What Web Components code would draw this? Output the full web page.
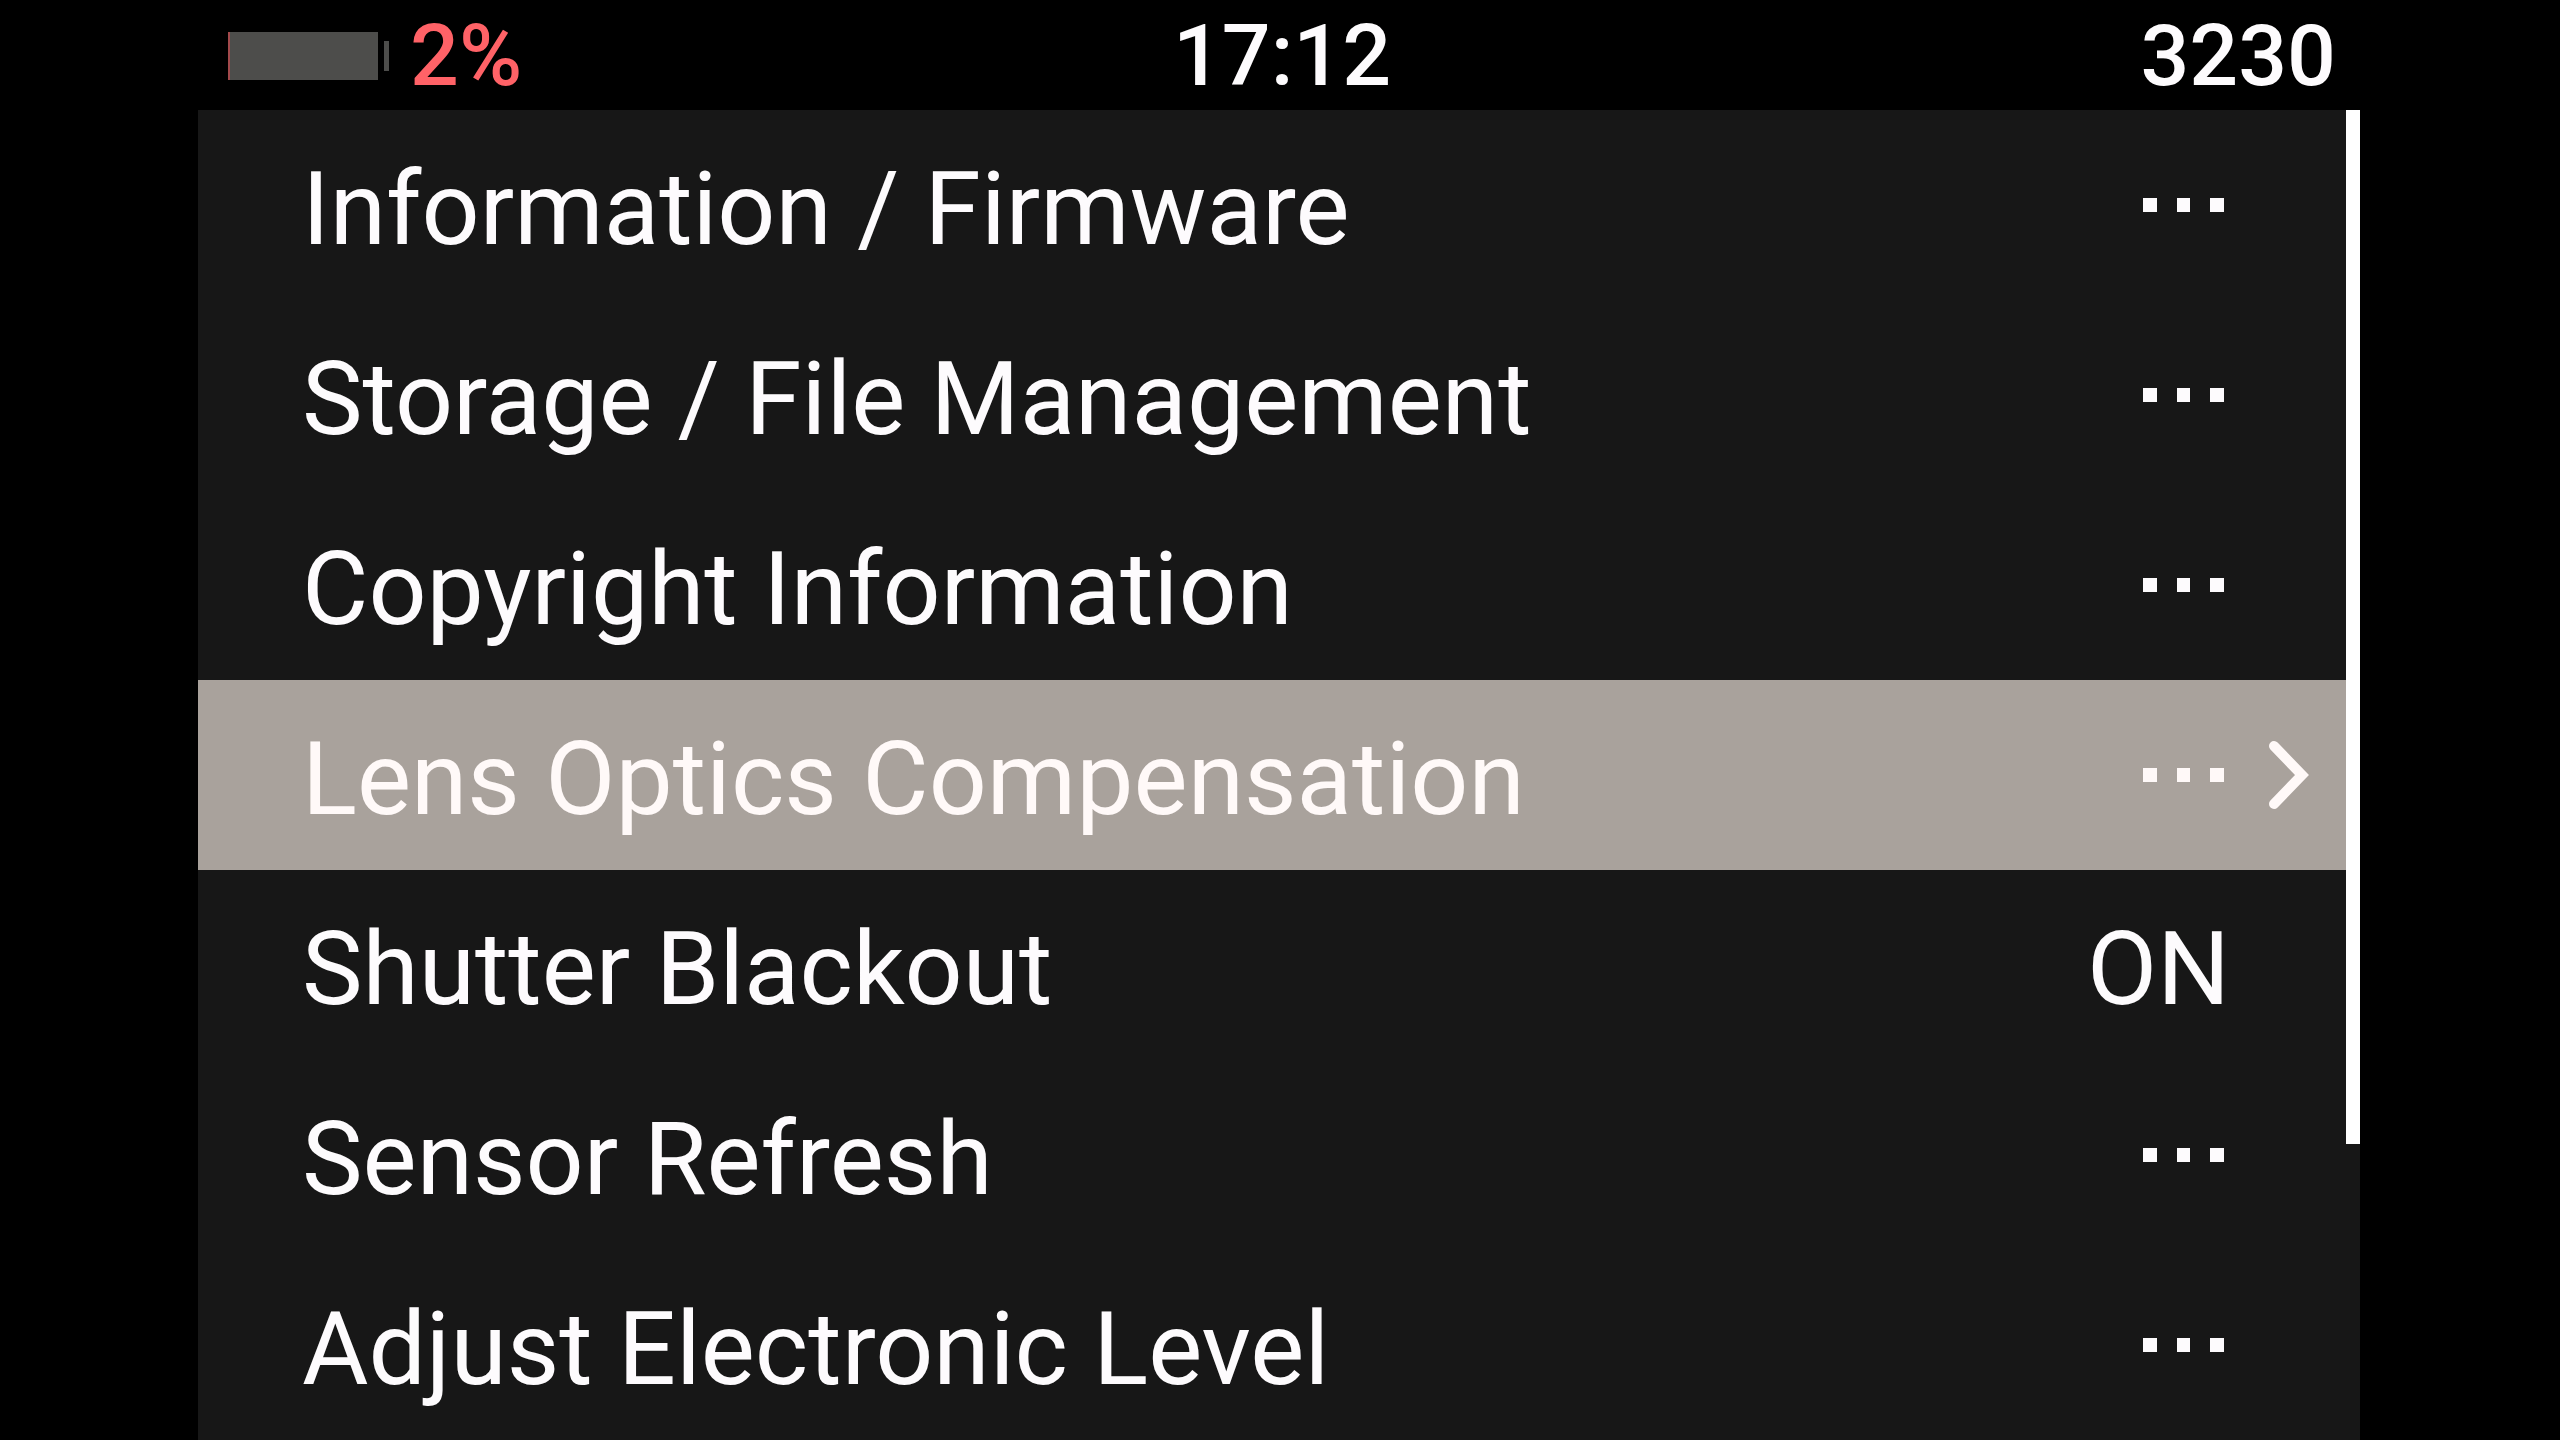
<!DOCTYPE html>
<html lang="en">
<head>
<meta charset="UTF-8">
<meta name="viewport" content="width=device-width, initial-scale=1.0">
<title>Camera Menu</title>
<style>
    body {
        margin: 0;
        background: #000;
        color: #fdfbfd;
        font-family: Roboto, "Liberation Sans", sans-serif;
    }
</style>
</head>
<body>
<camera-menu></camera-menu>
<script>
// Battery icon with its charge level
class BatteryLevel extends HTMLElement {
    constructor() {
        super();
        this.attachShadow({ mode: 'open' });
    }
    connectedCallback() {
        const level = Number(this.getAttribute('level'));
        this.shadowRoot.innerHTML = `
            <style>
                :host {
                    display: flex;
                    align-items: center;
                    gap: 20px;
                    color: #ff6267;
                }
                svg { display: block; }
            </style>
            <svg width="162" height="48" viewBox="0 0 162 48" aria-hidden="true">
                <rect width="150" height="48" fill="#4d4d4b"/>
                <rect width="${level}" height="48" fill="#a34a4c"/>
                <rect x="156" y="9" width="5" height="30" fill="#4d4d4b"/>
            </svg>
            <span>${level}%</span>
        `;
    }
}
customElements.define('battery-level', BatteryLevel);

// Top bar: battery, clock, remaining shots
class StatusBar extends HTMLElement {
    constructor() {
        super();
        this.attachShadow({ mode: 'open' });
    }
    connectedCallback() {
        this.shadowRoot.innerHTML = `
            <style>
                :host {
                    display: grid;
                    grid-template-columns: 1fr auto 1fr;
                    align-items: center;
                    height: 110px;
                    padding: 0 24px 0 30px;
                    font-size: 86px;
                    font-weight: 500;
                    line-height: 112px;
                }
                .shots { text-align: right; }
            </style>
            <slot name="battery"></slot>
            <time><slot name="time"></slot></time>
            <div class="shots"><slot name="shots"></slot></div>
        `;
    }
}
customElements.define('status-bar', StatusBar);

// One menu line; without a value it shows the submenu dots
class MenuItem extends HTMLElement {
    constructor() {
        super();
        this.attachShadow({ mode: 'open' });
    }
    connectedCallback() {
        const value = this.getAttribute('value');
        const selected = this.hasAttribute('selected');
        const dots = `
            <svg class="dots" width="82" height="14" viewBox="0 0 82 14" aria-hidden="true" fill="currentColor">
                <rect x="1" width="14" height="14"/>
                <rect x="35" width="13" height="14"/>
                <rect x="68" width="14" height="14"/>
            </svg>`;
        const arrow = `
            <svg width="42" height="70" viewBox="0 0 42 70" aria-hidden="true"
                fill="none" stroke="currentColor" stroke-width="10" stroke-linecap="round">
                <path d="M6 6L34 35L6 64"/>
            </svg>`;
        this.shadowRoot.innerHTML = `
            <style>
                :host { display: block; }
                button {
                    display: grid;
                    grid-template-columns: 1fr auto 116px;
                    align-items: center;
                    width: 100%;
                    height: 190px;
                    padding: 0 0 0 104px;
                    border: 0;
                    background: none;
                    color: inherit;
                    font: inherit;
                    font-size: 102px;
                    line-height: 120px;
                    text-align: left;
                    white-space: nowrap;
                }
                :host([selected]) button {
                    background: #a9a29c;
                    color: #fff9f8;
                }
                svg { display: block; }
                .text { padding-top: 8px; }
                .dots { margin-right: 6px; }
                .arrow { padding-left: 38px; }
            </style>
            <button type="button">
                <span class="text"><slot></slot></span>
                ${value ? `<span class="text">${value}</span>` : dots}
                <span class="arrow">${selected ? arrow : ''}</span>
            </button>
        `;
    }
}
customElements.define('menu-item', MenuItem);

// Menu lines with the scroll position on the right
class MenuList extends HTMLElement {
    constructor() {
        super();
        this.attachShadow({ mode: 'open' });
    }
    connectedCallback() {
        this.shadowRoot.innerHTML = `
            <style>
                :host {
                    display: grid;
                    grid-template-columns: 1fr 14px;
                    background: #171717;
                }
                .track {
                    display: grid;
                    grid-template-rows: 7fr 2fr;
                }
                .thumb { background: #fff; }
            </style>
            <nav><slot></slot></nav>
            <div class="track"><div class="thumb"></div></div>
        `;
    }
}
customElements.define('menu-list', MenuList);

// Whole screen
class CameraMenu extends HTMLElement {
    constructor() {
        super();
        this.attachShadow({ mode: 'open' });
    }
    connectedCallback() {
        this.shadowRoot.innerHTML = `
            <style>
                :host {
                    display: flex;
                    flex-direction: column;
                    min-height: 100vh;
                    padding: 0 200px 0 198px;
                    box-sizing: border-box;
                }
                menu-list { flex: 1; }
            </style>
            <status-bar>
                <battery-level slot="battery" level="2"></battery-level>
                <span slot="time">17:12</span>
                <span slot="shots">3230</span>
            </status-bar>
            <menu-list>
                <menu-item>Information / Firmware</menu-item>
                <menu-item>Storage / File Management</menu-item>
                <menu-item>Copyright Information</menu-item>
                <menu-item selected>Lens Optics Compensation</menu-item>
                <menu-item value="ON">Shutter Blackout</menu-item>
                <menu-item>Sensor Refresh</menu-item>
                <menu-item>Adjust Electronic Level</menu-item>
            </menu-list>
        `;
    }
}
customElements.define('camera-menu', CameraMenu);
</script>
</body>
</html>
